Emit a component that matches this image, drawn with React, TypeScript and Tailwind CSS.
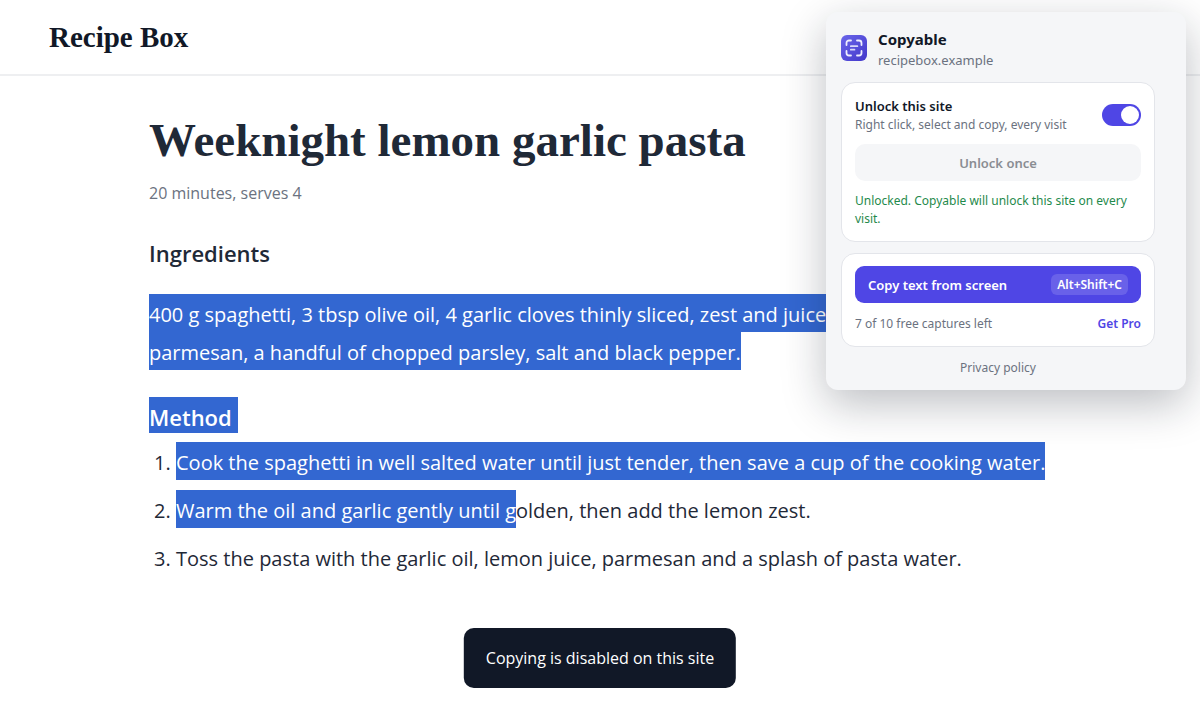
import { useState, type ReactNode } from "react";

interface SelectedProps {
  children: ReactNode;
  className?: string;
}

function Selected({ children, className = "" }: SelectedProps) {
  return (
    <mark className={`inline-block bg-[#3367d1] pt-1 text-white ${className}`}>
      {children}
    </mark>
  );
}

function Logo() {
  return (
    <svg className="mt-[7px]" width="26" height="26" viewBox="0 0 26 26" fill="none" aria-hidden="true">
      <defs>
        <linearGradient id="logo" x1="0" y1="0" x2="26" y2="26" gradientUnits="userSpaceOnUse">
          <stop stopColor="#6a66ea" />
          <stop offset="1" stopColor="#4338ca" />
        </linearGradient>
      </defs>
      <rect width="26" height="26" rx="6" fill="url(#logo)" />
      <path
        d="M5.500 10V8A2.500 2.500 0 0 1 8 5.500h2M16 5.500h2A2.500 2.500 0 0 1 20.500 8v2M20.500 16v2a2.500 2.500 0 0 1-2.500 2.500h-2M10 20.500H8A2.500 2.500 0 0 1 5.500 18v-2"
        stroke="#eeeefe"
        strokeWidth="1.8"
        strokeLinecap="round"
      />
      <path
        d="M9.800 11.200h6.600M9.800 14.700h3.700"
        stroke="#eeeefe"
        strokeWidth="1.7"
        strokeLinecap="round"
        opacity="0.85"
      />
    </svg>
  );
}

function Recipe() {
  return (
    <main className="mx-auto max-w-[902px] pt-[38px] text-[20px] leading-[34px] text-[#1f2937]">
      <h1 className="font-['Liberation_Serif',serif] text-[47px] leading-[52px] font-bold">
        Weeknight lemon garlic pasta
      </h1>
      <p className="mt-[13px] text-[16px] leading-7 text-[#6b7280]">20 minutes, serves 4</p>
      <h2 className="mt-7 text-[22px] leading-9 font-semibold">Ingredients</h2>
      <p className="mt-[23px] flex flex-col items-start">
        <Selected className="pr-6">
          400 g spaghetti, 3 tbsp olive oil, 4 garlic cloves thinly sliced, zest and juice
        </Selected>
        <Selected>
          parmesan, a handful of chopped parsley, salt and black pepper.
        </Selected>
      </p>
      <h2 className="mt-[27px] text-[22px] leading-8 font-semibold">
        <Selected className="pr-1.5">Method</Selected>
      </h2>
      <ol className="mt-[9px] flex list-decimal flex-col gap-2.5 pl-[27px]">
        <li>
          <Selected>
            Cook the spaghetti in well salted water until just tender, then save a cup of the cooking water.
          </Selected>
        </li>
        <li>
          <Selected>Warm the oil and garlic gently until g</Selected>olden, then add the lemon zest.
        </li>
        <li className="pt-1">
          Toss the pasta with the garlic oil, lemon juice, parmesan and a splash of pasta water.
        </li>
      </ol>
    </main>
  );
}

function Popup() {
  const [unlocked, setUnlocked] = useState(true);

  return (
    <aside className="absolute top-3 right-3.5 w-[360px] rounded-xl bg-[#f5f6f8] pt-4 pr-[31px] pb-[13px] pl-[15px] font-['Noto_Sans',sans-serif] text-[12px] leading-[18px] text-[#6b7280] shadow-[0_14px_44px_rgba(17,24,39,0.28)]">
      <div className="flex items-start gap-[11px]">
        <Logo />
        <div>
          <div className="text-[15px] leading-[22px] font-bold text-[#111827]">Copyable</div>
          <div className="text-[13px] leading-5">recipebox.example</div>
        </div>
      </div>

      <section className="mt-3 rounded-[14px] border border-[#e3e5ea] bg-white p-[13px]">
        <label className="flex items-center justify-between">
          <span>
            <span className="block text-[13px] leading-5 font-semibold text-[#111827]">Unlock this site</span>
            <span className="block">Right click, select and copy, every visit</span>
          </span>
          <span className="relative flex">
            <input
              type="checkbox"
              checked={unlocked}
              onChange={(e) => setUnlocked(e.target.checked)}
              className="peer h-[22px] w-[39px] appearance-none rounded-full bg-gray-300 checked:bg-[#4f46e5]"
            />
            <span className="pointer-events-none absolute top-0.5 left-0.5 size-[18px] rounded-full bg-white peer-checked:left-[19px]" />
          </span>
        </label>
        <button
          disabled
          className="mt-2.5 h-[37px] w-full rounded-[10px] bg-[#f5f6f8] text-[13px] font-semibold text-[#8a8d93]"
        >
          Unlock once
        </button>
        <p className="mt-[11px] text-[#1f8a4c]">
          Unlocked. Copyable will unlock this site on every visit.
        </p>
      </section>

      <section className="mt-[11px] rounded-[14px] border border-[#e3e5ea] bg-white px-[13px] pt-3 pb-[13px]">
        <button className="flex h-[37px] w-full items-center justify-between rounded-[9px] bg-[#4f46e5] px-[13px] text-[13px] font-semibold text-white">
          Copy text from screen
          <kbd className="rounded-md bg-white/15 px-1.5 font-['Noto_Sans',sans-serif] text-[12px] leading-[21px]">
            Alt+Shift+C
          </kbd>
        </button>
        <div className="mt-3 flex justify-between">
          <span>7 of 10 free captures left</span>
          <a href="#pro" className="font-semibold text-[#4f46e5]">
            Get Pro
          </a>
        </div>
      </section>

      <div className="mt-3 text-center">
        <a href="#privacy">Privacy policy</a>
      </div>
    </aside>
  );
}

export default function App() {
  return (
    <div className="relative min-h-screen bg-white font-['Open_Sans',sans-serif]">
      <header className="border-b-2 border-[#eeeff1] px-[49px] py-5">
        <div className="font-['Liberation_Serif',serif] text-[29px] leading-[34px] font-bold text-[#111827]">
          Recipe Box
        </div>
      </header>
      <Recipe />
      <Popup />
      <div
        role="status"
        className="fixed bottom-8 left-1/2 -translate-x-1/2 rounded-[10px] bg-[#111827] px-[22px] py-4 text-[16px] leading-7 whitespace-nowrap text-white"
      >
        Copying is disabled on this site
      </div>
    </div>
  );
}
